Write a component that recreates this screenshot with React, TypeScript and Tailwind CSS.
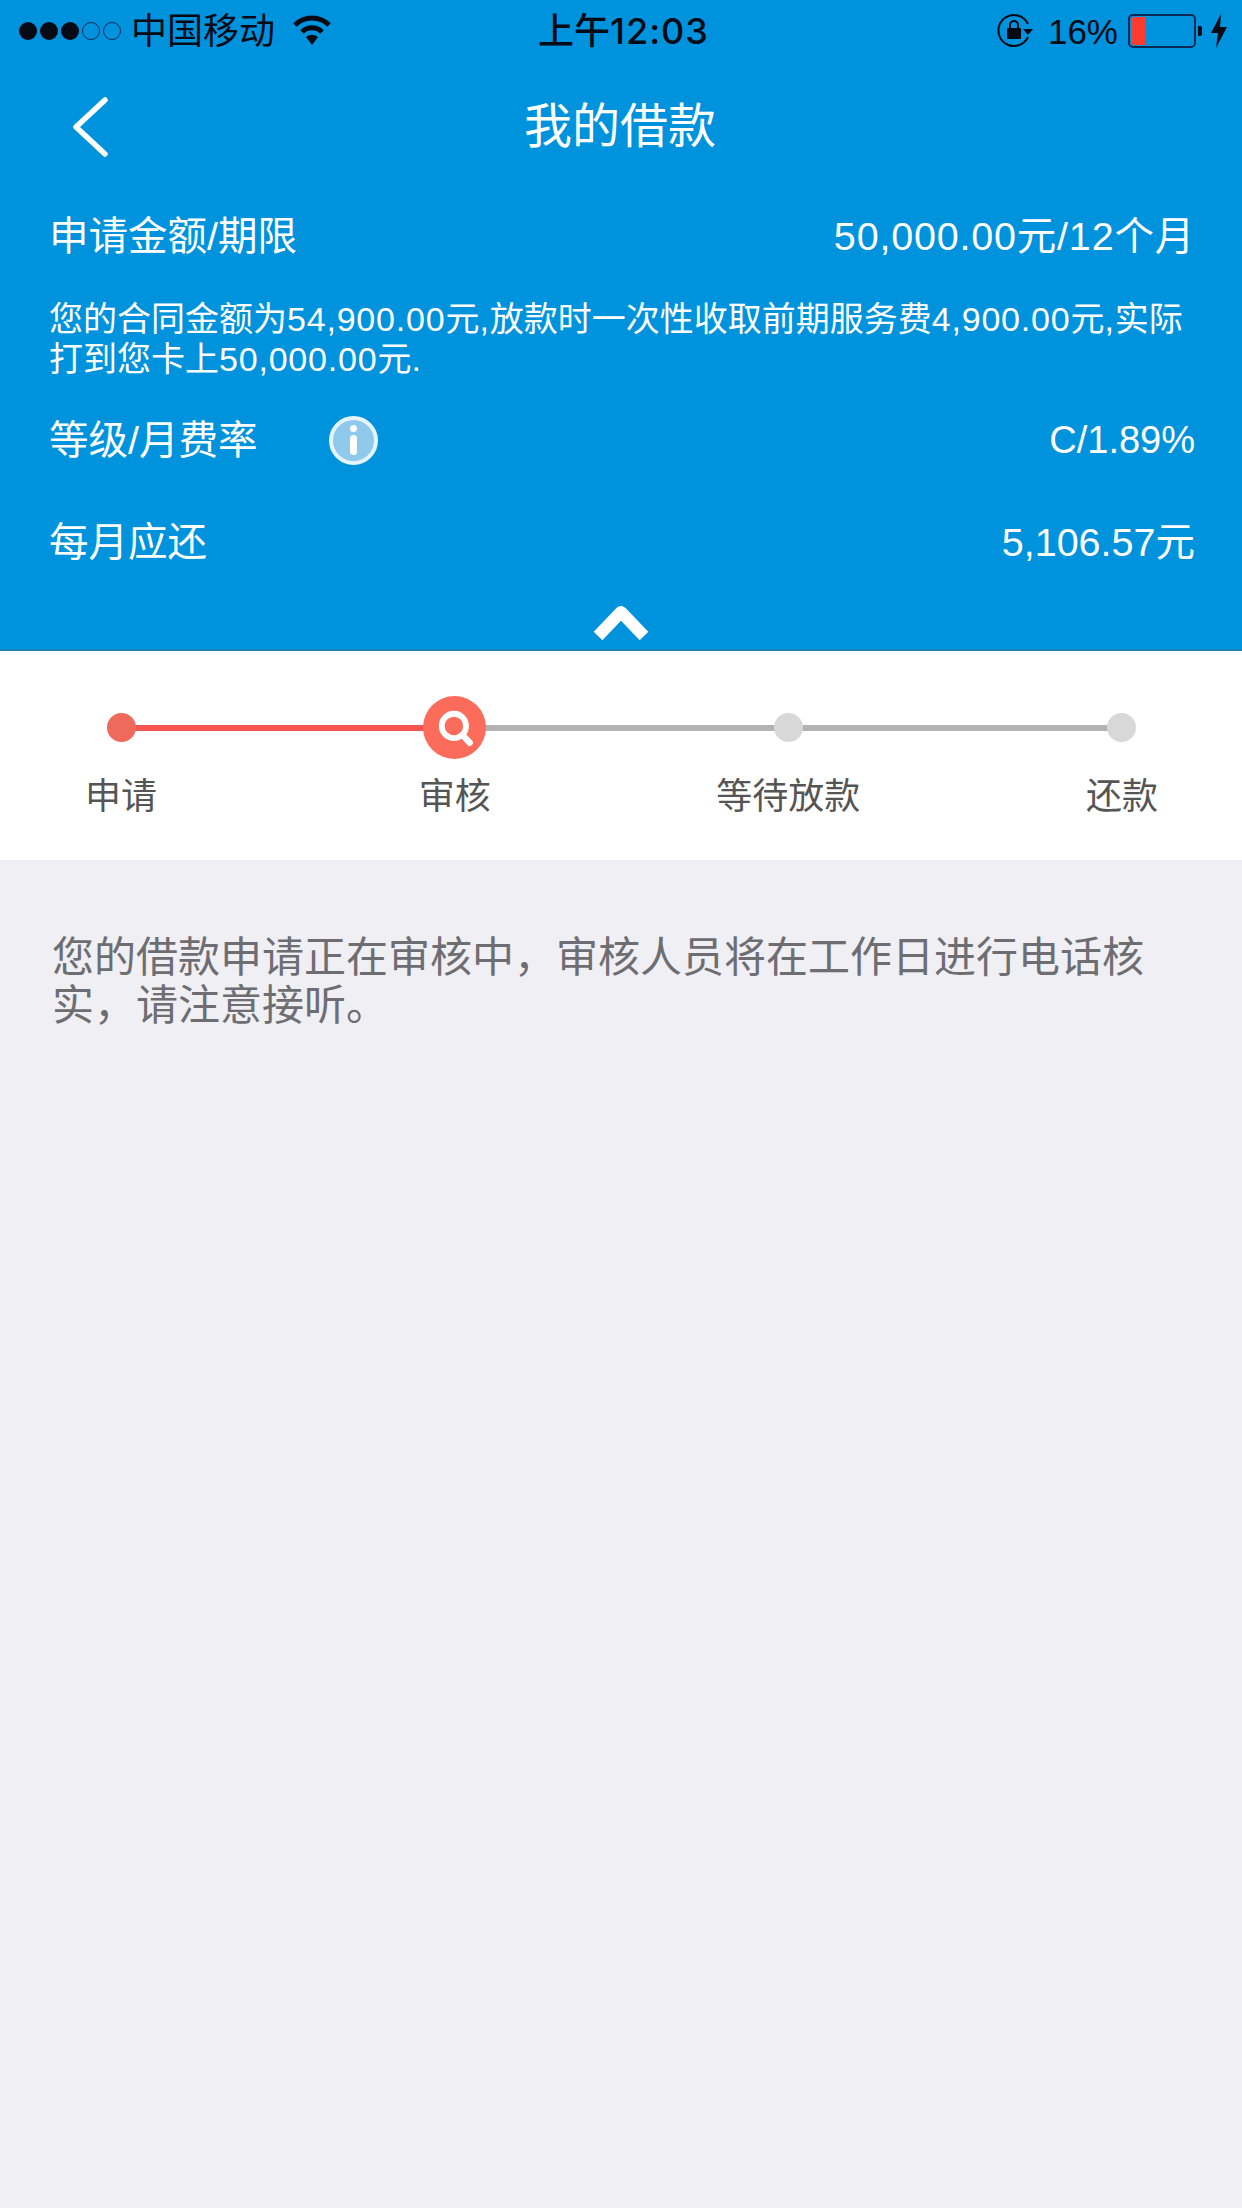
const font = "font-['Liberation_Sans','Noto_Sans_CJK_SC',sans-serif]";

function Wifi() {
  return (
    <svg width="38" height="34" viewBox="0 0 38 34" className="ml-[18px]">
      <path d="M2 11 A24 24 0 0 1 36 11" fill="none" stroke="#050a14" strokeWidth="5" />
      <path d="M9 18 A14 14 0 0 1 29 18" fill="none" stroke="#050a14" strokeWidth="5" />
      <path d="M13 23 A9 9 0 0 1 25 23 L19 31 Z" fill="#050a14" />
    </svg>
  );
}

function RotationLock() {
  return (
    <svg width="36" height="36" viewBox="0 0 36 36">
      <path d="M31 24 A15.5 15.5 0 1 1 31 11" fill="none" stroke="#050a14" strokeWidth="2" />
      <path d="M26 16 L36 16 L31 22 Z" fill="#050a14" />
      <rect x="10" y="15" width="14" height="11" rx="1" fill="#050a14" />
      <path d="M13 15 V12 A4 4 0 0 1 21 12 V15" fill="none" stroke="#050a14" strokeWidth="2" />
    </svg>
  );
}

function StatusBar() {
  return (
    <div className="h-[62px] flex items-center justify-between pl-[19px] pr-[14px] text-[#050a14]">
      <div className="flex items-center w-[500px]">
        <div className="flex items-center gap-[3px]">
          {[0, 1, 2].map((i) => (
            <span key={i} className="w-[18px] h-[18px] rounded-full bg-[#050a14]" />
          ))}
          {[0, 1].map((i) => (
            <span key={i} className="w-[18px] h-[18px] rounded-full border border-[#0a2a55]" />
          ))}
        </div>
        <span className="ml-[10px] mt-[1px] text-[36px] leading-[44px]">中国移动</span>
        <Wifi />
      </div>
      <span className="mt-[1px] text-[36px] leading-[44px] font-medium whitespace-nowrap">
        上午<span className="font-['Inter'] tracking-[1px]">12:03</span>
      </span>
      <div className="flex items-center justify-end w-[500px]">
        <RotationLock />
        <span className="ml-[15px] mt-[1px] text-[35px] leading-[44px]">16%</span>
        <div className="ml-[10px] w-[68px] h-[34px] rounded-[5px] border-2 border-[#0a2a55] p-[1px]">
          <div className="w-[14px] h-full rounded-l-[3px] bg-[#ff3b30]" />
        </div>
        <span className="ml-[2px] w-[4px] h-[10px] rounded-r-[2px] bg-[#050a14]" />
        <svg width="18" height="34" viewBox="0 0 18 34" className="ml-[8px]">
          <path d="M11 0 L1 19 H8 L6 34 L17 13 H10 Z" fill="#050a14" />
        </svg>
      </div>
    </div>
  );
}

function NavBar() {
  return (
    <div className="relative h-[125px] flex items-center justify-center text-white">
      <svg
        width="36"
        height="60"
        viewBox="0 0 36 60"
        className="absolute left-[72px] top-[35px]"
      >
        <path d="M33 3 L4 30 L33 57" fill="none" stroke="#fff" strokeWidth="5.5" strokeLinecap="round" strokeLinejoin="round" />
      </svg>
      <span className="text-[48px] leading-[60px] mt-[4px] ml-[-2px]">我的借款</span>
    </div>
  );
}

function Num({ children }: { children: React.ReactNode }) {
  return <span className="tracking-[0.8px]">{children}</span>;
}

function Summary() {
  return (
    <div className="bg-[#0093dd] border-b-2 border-[#1685b8] h-[651px] flex flex-col">
      <StatusBar />
      <NavBar />
      <div className="pl-[49px] pr-[47px] mt-[25px] text-white">
        <div className="h-[48px] flex items-center justify-between text-[39.5px] leading-[48px]">
          <span>申请金额/期限</span>
          <span className="tracking-[0.8px]">50,000.00元/12个月</span>
        </div>
        <p className="mt-[39px] text-[34px] leading-[40px]">
          您的合同金额为<Num>54,900.00</Num>元<Num>,</Num>放款时一次性收取前期服务费<Num>4,900.00</Num>元<Num>,</Num>实际打到您卡上<Num>50,000.00</Num>元.
        </p>
        <div className="mt-[37px] h-[48px] flex items-center justify-between text-[39.5px] leading-[48px]">
          <div className="flex items-center">
            <span>等级/月费率</span>
            <span className="ml-[72px] w-[49px] h-[49px] rounded-full bg-[#8fc9ec] border-[4px] border-[#e6f4fb] flex flex-col items-center justify-center gap-[3px]">
              <span className="w-[7px] h-[7px] rounded-full bg-white" />
              <span className="w-[7px] h-[20px] rounded-full bg-white" />
            </span>
          </div>
          <span className="text-[38px]">C/1.89%</span>
        </div>
        <div className="mt-[54px] h-[48px] flex items-center justify-between text-[39.5px] leading-[48px]">
          <span>每月应还</span>
          <span>5,106.57元</span>
        </div>
      </div>
      <div className="flex justify-center mt-[35px]">
        <svg width="60" height="40" viewBox="0 0 60 40">
          <path d="M7 35 L30 11 L53 35" fill="none" stroke="#fff" strokeWidth="12" strokeLinejoin="round" />
        </svg>
      </div>
    </div>
  );
}

const steps = [
  { label: "申请", dot: "bg-[#ee6b5c]" },
  { label: "审核", dot: "" },
  { label: "等待放款", dot: "bg-[#d8d8d8]" },
  { label: "还款", dot: "bg-[#d8d8d8]" },
];

function Progress() {
  return (
    <div className="bg-white h-[209px] pl-[107px] pr-[106px] pt-[45px]">
      <div className="relative h-[63px] flex items-center justify-between">
        <div className="absolute left-[14px] w-[334px] top-[29px] h-[6px] bg-[#f65451]" />
        <div className="absolute left-[348px] right-[14px] top-[29px] h-[6px] bg-[#b3b3b3]" />
        {steps.map((s) => (
          <span key={s.label} className="relative w-[28px] flex justify-center">
            {s.dot ? (
              <span className={`w-[29px] h-[29px] shrink-0 rounded-full ${s.dot}`} />
            ) : (
              <span className="w-[63px] h-[63px] shrink-0 rounded-full bg-[#fd6b5b] flex items-center justify-center">
                <svg width="38" height="38" viewBox="0 0 36 36" className="ml-[2px]">
                  <circle cx="16" cy="16" r="11.5" fill="none" stroke="#fff" strokeWidth="5.5" />
                  <path d="M24.5 25 L31 32" stroke="#fff" strokeWidth="6" strokeLinecap="round" />
                </svg>
              </span>
            )}
          </span>
        ))}
      </div>
      <div className="mt-[16px] flex justify-between text-[36px] leading-[44px] text-[#555555]">
        {steps.map((s) => (
          <span key={s.label} className="w-[28px] flex justify-center whitespace-nowrap">
            {s.label}
          </span>
        ))}
      </div>
    </div>
  );
}

export default function App() {
  return (
    <div className={`w-[1242px] h-[2208px] bg-[#efeff4] overflow-hidden ${font}`}>
      <Summary />
      <Progress />
      <p className="pt-[74px] px-[52px] text-[42px] leading-[48px] text-[#6d6d72]">
        您的借款申请正在审核中，审核人员将在工作日进行电话核实，请注意接听。
      </p>
    </div>
  );
}
